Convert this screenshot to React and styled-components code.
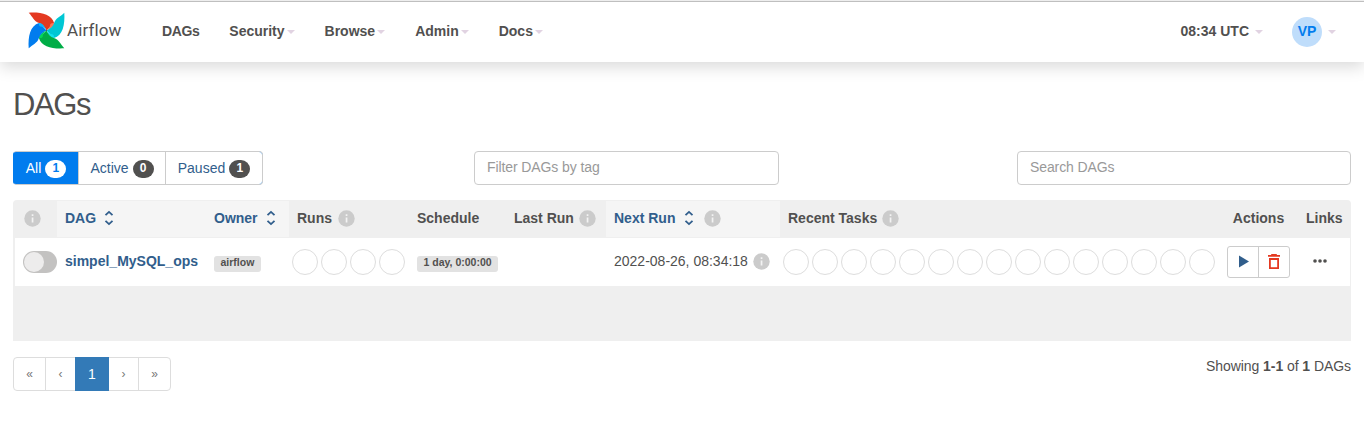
import React from "react";
import styled, { createGlobalStyle, css } from "styled-components";

const GlobalStyle = createGlobalStyle`
  * { box-sizing: border-box; }
  body {
    margin: 0;
    background: #fff;
    color: #51504f;
    font-family: "Liberation Sans", Arial, sans-serif;
    font-size: 14px;
    line-height: 20px;
    overflow: hidden;
  }
  button, input { font: inherit; color: inherit; }
`;

const Header = styled.header`
  display: flex;
  align-items: center;
  height: 62px;
  padding: 0 28px 2px;
  border-top: 1px solid #eee;
  background: linear-gradient(#bfbfbf 1px, #fff 1px);
  box-shadow: 0 5px 15px rgba(0, 0, 0, 0.15);
`;

const Brand = styled.div`
  display: flex;
  align-items: center;
  width: 134px;
  height: 60px;
  padding-bottom: 1px;
`;

const Wordmark = styled.span`
  margin: 0 0 0 2px;
  font-family: Roboto, sans-serif;
  font-size: 17px;
  letter-spacing: 0.1px;
`;

const Nav = styled.nav`
  display: flex;
  flex: 1;
  gap: 30px;
`;

const NavItem = styled.div`
  display: flex;
  align-items: center;
  font-weight: bold;
  white-space: nowrap;
`;

const HomeItem = styled(NavItem)`
  letter-spacing: -0.4px;
`;

const Caret = styled.i`
  margin: 2px 0 0 ${(p) => p.$gap || 2}px;
  border: 4px solid transparent;
  border-top-color: #e1d3e2;
  border-bottom: 0;
`;

const Avatar = styled.span`
  width: 30px;
  height: 30px;
  margin: 2px 0 0 29px;
  border-radius: 50%;
  background: #bfddfb;
  color: #017cee;
  line-height: 28px;
  text-align: center;
`;

const Main = styled.main`
  padding: 26px 13px 0;
`;

const Title = styled.h1`
  margin: 0 0 29px;
  font-size: 31px;
  font-weight: normal;
  letter-spacing: -1.4px;
  line-height: 34px;
`;

const Toolbar = styled.div`
  display: flex;
  height: 34px;
  margin-bottom: 15px;
`;

const Filters = styled.div`
  display: flex;
  width: 250px;
  border: 1px solid #ccc;
  border-radius: 4px;
  overflow: hidden;
  ${(p) => p.$activeFirst && css`
    border-left-color: #017cee;
    background: #017cee;
  `}
`;

const Filter = styled.button`
  display: flex;
  align-items: center;
  justify-content: center;
  width: ${(p) => p.$width}px;
  padding: 0 0 1px;
  border: 0;
  border-left: ${(p) => (p.$active ? 0 : "1px solid #ccc")};
  background: ${(p) => (p.$active ? "#017cee" : "#fff")};
  color: ${(p) => (p.$active ? "#fff" : "#315e8c")};
  white-space: nowrap;
  ${(p) => p.$active && css`
    margin: -1px 0;
  `}
`;

const Count = styled.span`
  width: 21px;
  height: 18px;
  margin: 2px 0 0 4px;
  border-radius: 10px;
  background: ${(p) => (p.$active ? "#fff" : "#51504f")};
  color: ${(p) => (p.$active ? "#017cee" : "#fff")};
  font-size: 12px;
  font-weight: bold;
  line-height: 17px;
`;

const Field = styled.input`
  width: ${(p) => p.$width}px;
  height: 34px;
  margin-left: ${(p) => p.$gap}px;
  padding: 5px 12px 7px;
  border: 1px solid #ccc;
  border-radius: 4px;
  outline: 0;
  &::placeholder { color: #999; letter-spacing: -0.1px; }
`;

const Table = styled.section`
  height: 141px;
  border-radius: 4px 4px 0 0;
  background: #efefef;
`;

const Row = styled.div`
  display: grid;
  grid-template-columns: 44px 149px 83px 120px 97px 100px 174px 439px 79px 53px;
`;

const HeadRow = styled(Row)`
  height: 38px;
`;

const BodyRow = styled(Row)`
  height: 48px;
  margin: 0 1px 0 2px;
  grid-template-columns: 42px 149px 83px 120px 97px 100px 174px 439px 79px 52px;
  background: #fff;
`;

const HeadCell = styled.div`
  display: flex;
  align-items: center;
  padding: 0 8px 2px;
  font-weight: bold;
  white-space: nowrap;
  justify-content: ${(p) => (p.$center ? "center" : "flex-start")};
  ${(p) => p.$sortable && css`
    margin: 1px 0;
    background: #f5f5f5;
    color: #315e8c;
  `}
`;

const Cell = styled.div`
  display: flex;
  align-items: center;
  padding: ${(p) => p.$pad || "0 8px 2px"};
  white-space: nowrap;
`;

const Switch = styled.span`
  flex: none;
  width: 34px;
  height: 22px;
  padding: 1px;
  border-radius: 11px;
  background: #c3c2c1;
  &::before {
    content: "";
    display: block;
    width: 20px;
    height: 20px;
    border-radius: 50%;
    background: #edecec;
  }
`;

const DagName = styled.strong`
  color: #315e8c;
`;

const Tag = styled.span`
  height: 16px;
  padding: 0 6.5px;
  border-radius: 3px;
  background: #e2e2e2;
  font-size: 10.5px;
  font-weight: bold;
  line-height: 13px;
`;

const Circles = styled.div`
  display: flex;
  gap: 3px;
`;

const Circle = styled.span`
  width: 26px;
  height: 26px;
  border: 1px solid #ddd;
  border-radius: 50%;
`;

const Actions = styled.div`
  display: flex;
  width: 63px;
  height: 32px;
  border: 1px solid #ccc;
  border-radius: 3px;
`;

const Action = styled.button`
  display: flex;
  flex: 1;
  align-items: center;
  justify-content: center;
  padding: 0;
  border: 0;
  background: none;
  & + & { border-left: 1px solid #ccc; }
`;

const Icon = styled.svg`
  flex: none;
  margin-left: ${(p) => p.$gap || 0}px;
`;

const Footer = styled.footer`
  display: flex;
  justify-content: space-between;
  padding-top: 16px;
`;

const Pager = styled.div`
  display: flex;
  height: 34px;
  border: 1px solid #ddd;
  border-radius: 4px;
`;

const Page = styled.button`
  width: ${(p) => p.$width}px;
  padding: 0;
  border: 0;
  border-left: ${(p) => (p.$divider ? "1px solid #ddd" : 0)};
  background: none;
  color: #777;
  font-size: 12px;
  ${(p) => p.$active && css`
    margin: -1px 0;
    padding-bottom: 1px;
    background: #337ab7;
    color: #fff;
    font-size: 14px;
  `}
`;

const Summary = styled.div`
  letter-spacing: -0.06px;
  line-height: 19px;
`;

const Info = ({ gap = 0 }) => (
  <Icon $gap={gap} width="17" height="17" viewBox="0 0 17 17">
    <circle cx="8.5" cy="8.5" r="8.2" fill="#cbcbcb" />
    <path d="M7.7 4.3h1.7v1.8H7.7zM7.7 7.5h1.7v5H7.7z" fill="#f3f3f3" />
  </Icon>
);

const Sort = ({ gap = 9 }) => (
  <Icon $gap={gap} width="10" height="16" viewBox="0 0 10 16" fill="none" stroke="#315e8c" strokeWidth="1.8">
    <path d="M1.5 5.2 5 1.9l3.5 3.3M1.5 10.8 5 14.1l3.5-3.3" />
  </Icon>
);

const blades = [
  { angle: 0, main: "#e43921", light: "#ff7557" },
  { angle: 90, main: "#00c7d4", light: "#11e1ee" },
  { angle: 180, main: "#00ad46", light: "#04d659" },
  { angle: 270, main: "#017cee", light: "#0cb6ff" },
];

const Pinwheel = () => (
  <svg width="37" height="37" viewBox="-18.5 -18.5 37 37">
    {blades.map((b) => (
      <g key={b.angle} transform={`rotate(${b.angle})`}>
        <path d="M-17.8-17.8C-6-18.5 5-16.5 7.6-7.4L0 0C-1.5-3.5-4-6.5-7.4-7.6-13-9.5-13.5-13.5-17.8-17.8Z" fill={b.main} />
        <path d="M0 0C2-2 3.8-3.5 3.9-6.4 5-7.5 6.4-7.8 7.6-7.4 8-4 3.5-1.5 0 0Z" fill={b.light} />
      </g>
    ))}
    <circle r="0.6" fill="#51504f" />
  </svg>
);

const circles = (n) => Array.from({ length: n }, (_, i) => <Circle key={i} />);

export default function App() {
  return (
    <>
      <GlobalStyle />
      <Header>
        <Brand><Pinwheel /><Wordmark>Airflow</Wordmark></Brand>
        <Nav>
          <HomeItem>DAGs</HomeItem>
          {["Security", "Browse", "Admin", "Docs"].map((name) => (
            <NavItem key={name}>{name}<Caret /></NavItem>
          ))}
        </Nav>
        <NavItem>08:34 UTC<Caret $gap={6} /></NavItem>
        <NavItem><Avatar>VP</Avatar><Caret $gap={6} /></NavItem>
      </Header>
      <Main>
        <Title>DAGs</Title>
        <Toolbar>
          <Filters $activeFirst>
            <Filter $active $width={64}>All<Count $active>1</Count></Filter>
            <Filter $width={87}>Active<Count>0</Count></Filter>
            <Filter $width={97}>Paused<Count>1</Count></Filter>
          </Filters>
          <Field $width={305} $gap={211} placeholder="Filter DAGs by tag" />
          <Field $width={334} $gap={238} placeholder="Search DAGs" />
        </Toolbar>
        <Table>
          <HeadRow>
            <HeadCell><Info gap={3} /></HeadCell>
            <HeadCell $sortable>DAG<Sort gap={8} /></HeadCell>
            <HeadCell $sortable>Owner<Sort gap={8} /></HeadCell>
            <HeadCell>Runs<Info gap={6} /></HeadCell>
            <HeadCell>Schedule</HeadCell>
            <HeadCell>Last Run<Info gap={5} /></HeadCell>
            <HeadCell $sortable>Next Run<Sort /><Info gap={10} /></HeadCell>
            <HeadCell>Recent Tasks<Info gap={5} /></HeadCell>
            <HeadCell $center>Actions</HeadCell>
            <HeadCell>Links</HeadCell>
          </HeadRow>
          <BodyRow>
            <Cell $pad="0 8px"><Switch /></Cell>
            <Cell><DagName>simpel_MySQL_ops</DagName></Cell>
            <Cell $pad="3px 8px 0"><Tag>airflow</Tag></Cell>
            <Cell $pad="0 0 0 3px"><Circles>{circles(4)}</Circles></Cell>
            <Cell $pad="3px 8px 0"><Tag>1 day, 0:00:00</Tag></Cell>
            <Cell />
            <Cell>2022-08-26, 08:34:18<Info gap={5} /></Cell>
            <Cell $pad="0 0 0 3px"><Circles>{circles(15)}</Circles></Cell>
            <Cell $pad="0 8px">
              <Actions>
                <Action aria-label="Trigger DAG">
                  <svg width="16" height="16" viewBox="0 0 16 16"><path d="M4 1.5v12L14 7.5Z" fill="#315e8c" /></svg>
                </Action>
                <Action aria-label="Delete DAG">
                  <svg width="14" height="18" viewBox="0 0 14 18" fill="none" stroke="#e43921" strokeWidth="1.8">
                    <path d="M1 2.9h12M4.2 1.9h5.6M2.9 6h8.2v9.2H2.9z" />
                  </svg>
                </Action>
              </Actions>
            </Cell>
            <Cell $pad="0 14px 2px">
              <svg width="16" height="6" viewBox="0 0 16 6" fill="#51504f">
                <circle cx="3" cy="3" r="1.8" /><circle cx="8" cy="3" r="1.8" /><circle cx="13" cy="3" r="1.8" />
              </svg>
            </Cell>
          </BodyRow>
        </Table>
        <Footer>
          <Pager>
            <Page $width={31}>«</Page>
            <Page $width={30} $divider>‹</Page>
            <Page $width={34} $active>1</Page>
            <Page $width={29}>›</Page>
            <Page $width={32} $divider>»</Page>
          </Pager>
          <Summary>Showing <b>1-1</b> of <b>1</b> DAGs</Summary>
        </Footer>
      </Main>
    </>
  );
}
